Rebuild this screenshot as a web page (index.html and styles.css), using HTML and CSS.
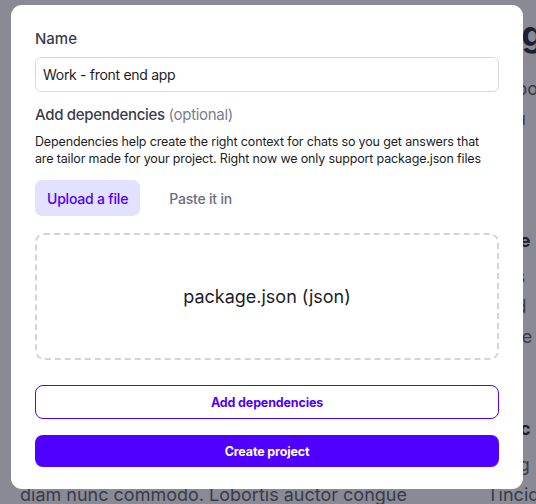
FILE: index.html
```html
<!DOCTYPE html>
<html>
<head>
<meta charset="utf-8">
<link rel="stylesheet" href="styles.css">
</head>
<body>
<div class="page">
  <div class="col left">
    <h1 class="bg-title">Lorem ipsum</h1>
    <p class="bg-text">Mauris vulputate turpis non nisl</p>
    <p class="bg-text">Dictum sem at tempus</p>
    <div class="spacer"></div>
    <h2 class="bg-sub">Audience</h2>
    <p class="bg-text">Aliquam quis</p>
    <p class="bg-text">Sed at nunc</p>
    <p class="bg-text">Dapibus eget</p>
    <div class="spacer2"></div>
    <h2 class="bg-sub">Rhoncus</h2>
    <p class="bg-text">Pellentesque integer</p>
    <p class="bg-text">diam nunc commodo. Lobortis auctor congue</p>
  </div>
  <div class="col right">
    <h1 class="bg-title">High</h1>
    <p class="bg-text">Purposes</p>
    <p class="bg-text">Amu</p>
    <div class="spacer"></div>
    <h2 class="bg-sub">Ence</h2>
    <p class="bg-text">Quis</p>
    <p class="bg-text">Ad d</p>
    <p class="bg-text">Las e</p>
    <div class="spacer2"></div>
    <h2 class="bg-sub">Tunc</h2>
    <p class="bg-text">Integ</p>
    <p class="bg-text">Tincidunt</p>
  </div>
</div>
<div class="overlay"></div>
<div class="modal">
  <label class="label">Name</label>
  <div class="input">Work - front end app</div>
  <div class="section-title">Add dependencies <span class="optional">(optional)</span></div>
  <p class="desc">Dependencies help create the right context for chats so you get answers that are tailor made for your project. Right now we only support package.json files</p>
  <div class="tabs">
    <button class="tab active">Upload a file</button>
    <button class="tab">Paste it in</button>
  </div>
  <div class="dropzone">package.json (json)</div>
  <button class="btn btn-outline">Add dependencies</button>
  <button class="btn btn-primary">Create project</button>
</div>
</body>
</html>
```
FILE: styles.css
```css
* { box-sizing: border-box; }
html, body { margin: 0; padding: 0; }
body {
  width: 536px;
  height: 504px;
  overflow: hidden;
  background: #f4f4f6;
  font-family: Inter, "Noto Sans", sans-serif;
}
.page {
  display: grid;
  grid-template-columns: 467px 200px;
  padding: 14px 0 0 20px;
  color: #1f2030;
}
.col { display: flex; flex-direction: column; }
.bg-title { font-size: 34px; font-weight: 700; margin: 0 0 20px; line-height: 40px; }
.bg-sub { font-size: 18px; font-weight: 700; margin: 0 0 8px; line-height: 26px; }
.bg-text { font-size: 18px; margin: 0; line-height: 30px; color: #555868; white-space: nowrap; }
.spacer { height: 94px; }
.spacer2 { height: 64px; }
.overlay {
  position: fixed;
  inset: 0;
  background: rgba(30, 32, 48, 0.5);
}
.modal {
  position: fixed;
  left: 11px;
  top: 5px;
  width: 512px;
  height: 484px;
  background: #fff;
  border-radius: 11px;
  padding: 24px 24px 22px;
  display: flex;
  flex-direction: column;
}
.modal > * { flex-shrink: 0; }
.label {
  font-size: 15px;
  font-weight: 500;
  color: #3b3d4c;
  line-height: 20px;
}
.input {
  margin-top: 8px;
  height: 35px;
  border: 1px solid #d6d7de;
  border-radius: 6px;
  padding: 0 7px;
  display: flex;
  align-items: center;
  font-size: 14px;
  letter-spacing: -0.3px;
  color: #1c1d28;
}
.section-title {
  margin-top: 13px;
  font-size: 15px;
  font-weight: 500;
  letter-spacing: -0.3px;
  color: #3b3d4c;
  line-height: 20px;
}
.optional { color: #7b7e8d; font-weight: 400; }
.desc {
  margin: 8px 0 0;
  font-size: 12.5px;
  letter-spacing: -0.15px;
  line-height: 17px;
  color: #1c1d28;
}
.tabs {
  margin-top: 13px;
  display: flex;
  gap: 17px;
}
.tab {
  border: 0;
  background: transparent;
  font-family: inherit;
  font-size: 14px;
  letter-spacing: -0.2px;
  font-weight: 500;
  color: #6b6e7e;
  height: 36px;
  padding: 0 12px;
  border-radius: 7px;
  white-space: nowrap;
}
.tab.active {
  background: #e2e1ff;
  color: #4f00f5;
}
.dropzone {
  margin-top: 17px;
  height: 127px;
  border: 2px dashed #d3d4db;
  border-radius: 9px;
  display: flex;
  align-items: center;
  justify-content: center;
  font-size: 18px;
  color: #1c1d28;
}
.btn {
  font-family: inherit;
  font-size: 12.5px;
  letter-spacing: -0.15px;
  font-weight: 700;
  border-radius: 8px;
  cursor: pointer;
}
.btn-outline {
  margin-top: 25px;
  height: 34px;
  background: #fff;
  border: 1.5px solid #5000ff;
  color: #5000ff;
}
.btn-primary {
  margin-top: 16px;
  height: 32px;
  background: #5000ff;
  border: 0;
  color: #fff;
}
```
